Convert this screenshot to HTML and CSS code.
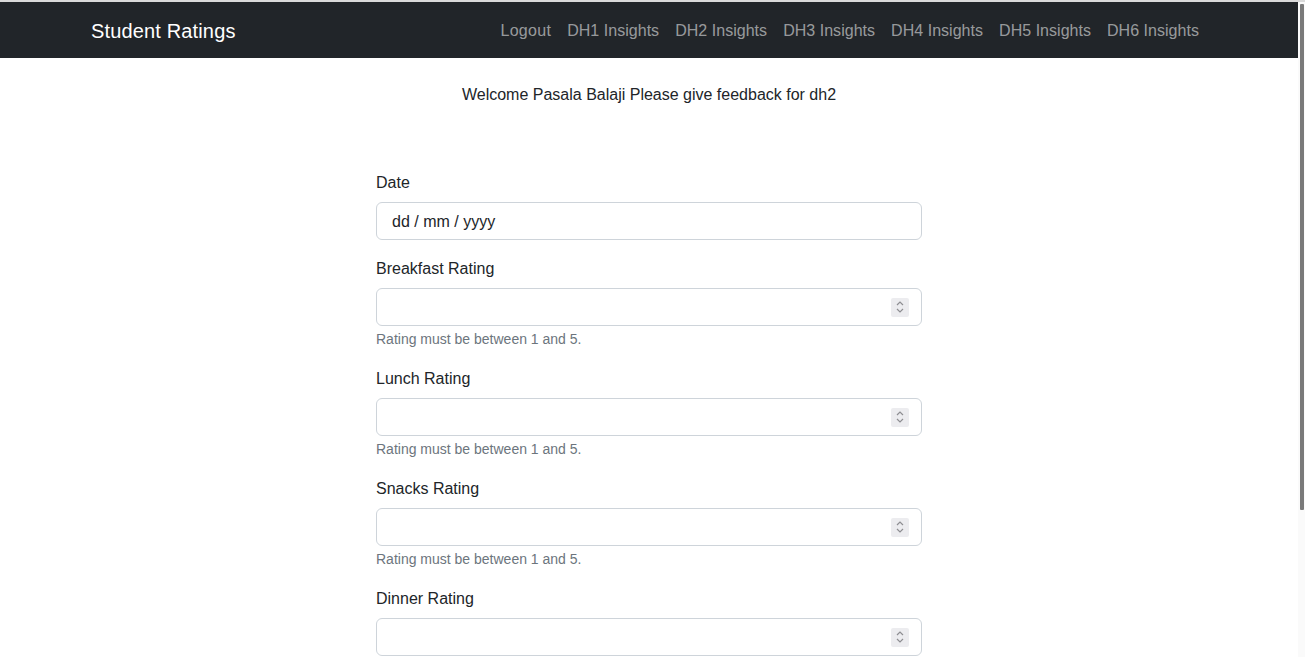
FILE: index.html
```html
<!DOCTYPE html>
<html lang="en">
<head>
<meta charset="utf-8">
<title>Student Ratings</title>
<link rel="stylesheet" href="styles.css">
</head>
<body>
<div class="viewport">
  <nav class="navbar">
    <div class="container nav-inner">
      <a class="brand" href="#">Student Ratings</a>
      <ul class="nav-links">
        <li><a href="#">Logout</a></li>
        <li><a href="#">DH1 Insights</a></li>
        <li><a href="#">DH2 Insights</a></li>
        <li><a href="#">DH3 Insights</a></li>
        <li><a href="#">DH4 Insights</a></li>
        <li><a href="#">DH5 Insights</a></li>
        <li><a href="#">DH6 Insights</a></li>
      </ul>
    </div>
  </nav>

  <p class="welcome">Welcome Pasala Balaji Please give feedback for dh2</p>

  <div class="container">
    <form class="form">
      <div class="field">
        <label class="label" for="date">Date</label>
        <input class="control date-input" id="date" type="text" value="dd / mm / yyyy" readonly>
      </div>

      <div class="field">
        <label class="label" for="breakfast">Breakfast Rating</label>
        <div class="control number-control">
          <input class="number-input" id="breakfast" type="text">
          <span class="spinner"><svg width="10" height="14" viewBox="0 0 10 14"><path d="M2 5 L5 2 L8 5 M2 9 L5 12 L8 9" fill="none" stroke="#8e8e92" stroke-width="1.2"/></svg></span>
        </div>
        <div class="help">Rating must be between 1 and 5.</div>
      </div>

      <div class="field">
        <label class="label" for="lunch">Lunch Rating</label>
        <div class="control number-control">
          <input class="number-input" id="lunch" type="text">
          <span class="spinner"><svg width="10" height="14" viewBox="0 0 10 14"><path d="M2 5 L5 2 L8 5 M2 9 L5 12 L8 9" fill="none" stroke="#8e8e92" stroke-width="1.2"/></svg></span>
        </div>
        <div class="help">Rating must be between 1 and 5.</div>
      </div>

      <div class="field">
        <label class="label" for="snacks">Snacks Rating</label>
        <div class="control number-control">
          <input class="number-input" id="snacks" type="text">
          <span class="spinner"><svg width="10" height="14" viewBox="0 0 10 14"><path d="M2 5 L5 2 L8 5 M2 9 L5 12 L8 9" fill="none" stroke="#8e8e92" stroke-width="1.2"/></svg></span>
        </div>
        <div class="help">Rating must be between 1 and 5.</div>
      </div>

      <div class="field">
        <label class="label" for="dinner">Dinner Rating</label>
        <div class="control number-control">
          <input class="number-input" id="dinner" type="text">
          <span class="spinner"><svg width="10" height="14" viewBox="0 0 10 14"><path d="M2 5 L5 2 L8 5 M2 9 L5 12 L8 9" fill="none" stroke="#8e8e92" stroke-width="1.2"/></svg></span>
        </div>
      </div>
    </form>
  </div>
</div>
<div class="scrollbar"><div class="thumb"></div></div>
</body>
</html>
```

FILE: styles.css
```css
* { box-sizing: border-box; }

html, body {
  margin: 0;
  height: 100%;
  overflow: hidden;
}

body {
  display: flex;
  border-top: 2px solid #dadada;
  background: #fff;
  font-family: "Liberation Sans", Arial, sans-serif;
  font-size: 16px;
  line-height: 1.5;
  color: #212529;
}

.viewport {
  flex: 1;
  overflow: hidden;
}

.scrollbar {
  width: 7px;
  background: #fafafa;
  padding: 2px 0 0 2px;
}

.thumb {
  width: 4px;
  height: 506px;
  background: #7a7a7a;
  border-radius: 1px;
}

.container {
  width: 1140px;
  margin: 0 auto;
  padding: 0 12px;
}

.navbar {
  background: #212529;
  padding: 8px 0;
}

.nav-inner {
  display: flex;
  align-items: center;
  justify-content: space-between;
}

.brand {
  color: #fff;
  text-decoration: none;
  font-size: 20px;
  line-height: 30px;
  padding: 6px 0 4px;
  letter-spacing: 0.15px;
}

.nav-links {
  display: flex;
  list-style: none;
  margin: 0;
  padding: 0;
}

.nav-links a {
  display: block;
  padding: 9px 8px 7px;
  color: rgba(255, 255, 255, 0.55);
  text-decoration: none;
  line-height: 24px;
  letter-spacing: 0.03px;
}

.nav-links li:first-child a {
  letter-spacing: 0.3px;
}

.welcome {
  margin: 25px 0 0;
  text-align: center;
  line-height: 24px;
}

.form {
  width: 546px;
  margin: 63px auto 0;
  padding-bottom: 180px;
}

.field {
  margin-bottom: 16px;
}

.label {
  display: block;
  padding-top: 1px;
  margin-bottom: 7px;
  line-height: 24px;
}

.control {
  display: block;
  width: 100%;
  height: 38px;
  border: 1px solid #ced4da;
  border-radius: 6px;
  background: #fff;
  font: inherit;
  color: #212529;
}

.date-input {
  padding: 7px 12px 5px 15px;
  outline: none;
}

.number-control {
  display: flex;
  align-items: center;
  padding: 0 12px;
}

.number-input {
  flex: 1;
  min-width: 0;
  border: 0;
  outline: none;
  background: transparent;
  font: inherit;
  color: #212529;
}

.spinner {
  display: flex;
  align-items: center;
  justify-content: center;
  width: 18px;
  height: 19px;
  background: #ececef;
  border-radius: 2px;
}

.help {
  margin-top: 3px;
  padding-bottom: 1px;
  font-size: 14px;
  line-height: 20px;
  color: #6c757d;
}
```
